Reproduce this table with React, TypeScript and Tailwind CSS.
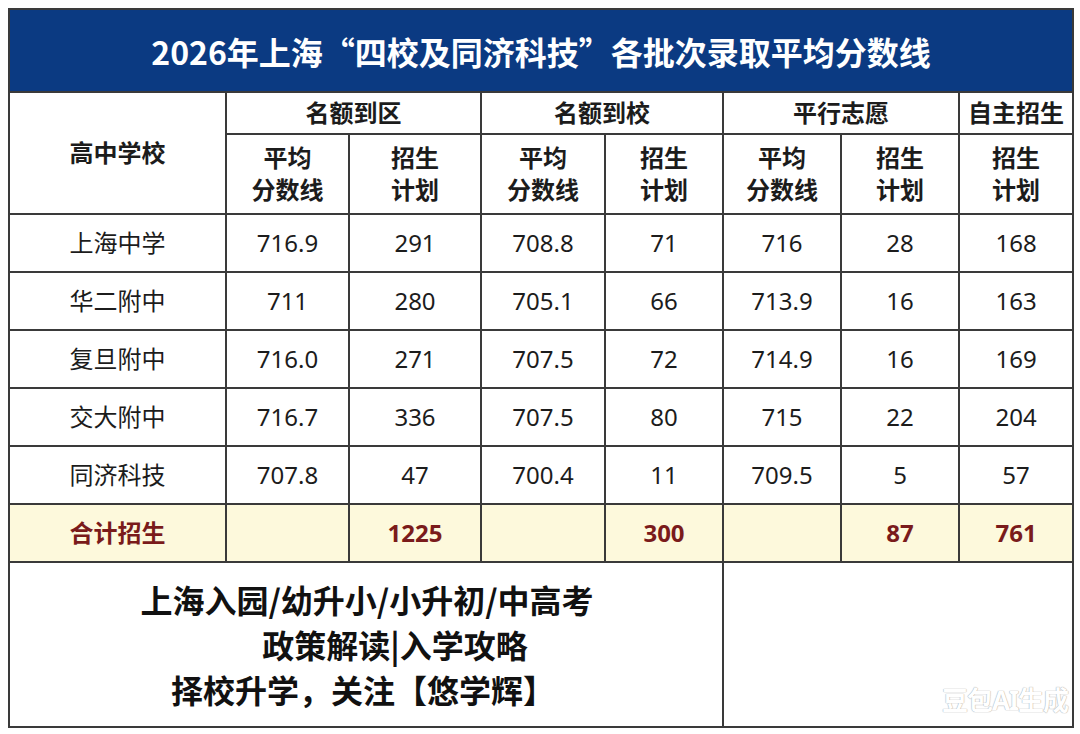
const rows = [
  { name: "上海中学", v: ["716.9", "291", "708.8", "71", "716", "28", "168"] },
  { name: "华二附中", v: ["711", "280", "705.1", "66", "713.9", "16", "163"] },
  { name: "复旦附中", v: ["716.0", "271", "707.5", "72", "714.9", "16", "169"] },
  { name: "交大附中", v: ["716.7", "336", "707.5", "80", "715", "22", "204"] },
  { name: "同济科技", v: ["707.8", "47", "700.4", "11", "709.5", "5", "57"] },
];

const totals = ["", "1225", "", "300", "", "87", "761"];

const cell = "border-2 border-[#3a3a3a] text-center align-middle";

function TwoLine({ a, b }: { a: string; b: string }) {
  return (
    <div className="flex flex-col items-center leading-[32px]">
      <span>{a}</span>
      <span>{b}</span>
    </div>
  );
}

export default function App() {
  return (
    <div className="w-[1080px] h-[734px] bg-white p-[8px] font-['Noto_Sans','Noto_Sans_CJK_SC',sans-serif] text-[#1c1c1c]">
      <table className="w-[1064px] border-collapse table-fixed">
        <colgroup>
          <col className="w-[217px]" />
          <col className="w-[123px]" />
          <col className="w-[132px]" />
          <col className="w-[124px]" />
          <col className="w-[118px]" />
          <col className="w-[118px]" />
          <col className="w-[118px]" />
          <col className="w-[114px]" />
        </colgroup>
        <thead>
          <tr className="h-[83px]">
            <th
              colSpan={8}
              className={`${cell} bg-[#0b3a82] text-white text-[32px] font-bold font-['Noto_Sans_CJK_SC',sans-serif]`}
            >
              2026年上海“四校及同济科技”各批次录取平均分数线
            </th>
          </tr>
          <tr className="h-[42px] text-[24px] font-bold">
            <th rowSpan={2} className={cell}>高中学校</th>
            <th colSpan={2} className={cell}>名额到区</th>
            <th colSpan={2} className={cell}>名额到校</th>
            <th colSpan={2} className={cell}>平行志愿</th>
            <th className={cell}>自主招生</th>
          </tr>
          <tr className="h-[80px] text-[24px] font-bold">
            <th className={cell}><TwoLine a="平均" b="分数线" /></th>
            <th className={cell}><TwoLine a="招生" b="计划" /></th>
            <th className={cell}><TwoLine a="平均" b="分数线" /></th>
            <th className={cell}><TwoLine a="招生" b="计划" /></th>
            <th className={cell}><TwoLine a="平均" b="分数线" /></th>
            <th className={cell}><TwoLine a="招生" b="计划" /></th>
            <th className={cell}><TwoLine a="招生" b="计划" /></th>
          </tr>
        </thead>
        <tbody className="text-[24px]">
          {rows.map((r) => (
            <tr key={r.name} className="h-[58px]">
              <td className={cell}>{r.name}</td>
              {r.v.map((x, i) => (
                <td key={i} className={cell}>{x}</td>
              ))}
            </tr>
          ))}
          <tr className="h-[58px] bg-[#fdf9dc] text-[#7a1b1b] font-bold">
            <td className={cell}>合计招生</td>
            {totals.map((x, i) => (
              <td key={i} className={cell}>{x}</td>
            ))}
          </tr>
          <tr className="h-[165px]">
            <td colSpan={5} className={cell}>
              <div className="flex flex-col items-center text-[32px] font-bold text-[#111] leading-[45px] font-['Noto_Sans_CJK_SC',sans-serif]">
                <span className="mr-[-2px]">上海入园/幼升小/小升初/中高考</span>
                <span className="ml-[58px]">政策解读|入学攻略</span>
                <span className="mr-[6px]">择校升学，关注【悠学辉】</span>
              </div>
            </td>
            <td colSpan={3} className={`${cell} relative`}>
              <span className="absolute right-[4px] bottom-[6px] text-[26px] font-bold tracking-[-1px] text-white [text-shadow:0_0_1px_#aaa,0_0_1px_#aaa]">
                豆包AI生成
              </span>
            </td>
          </tr>
        </tbody>
      </table>
    </div>
  );
}
